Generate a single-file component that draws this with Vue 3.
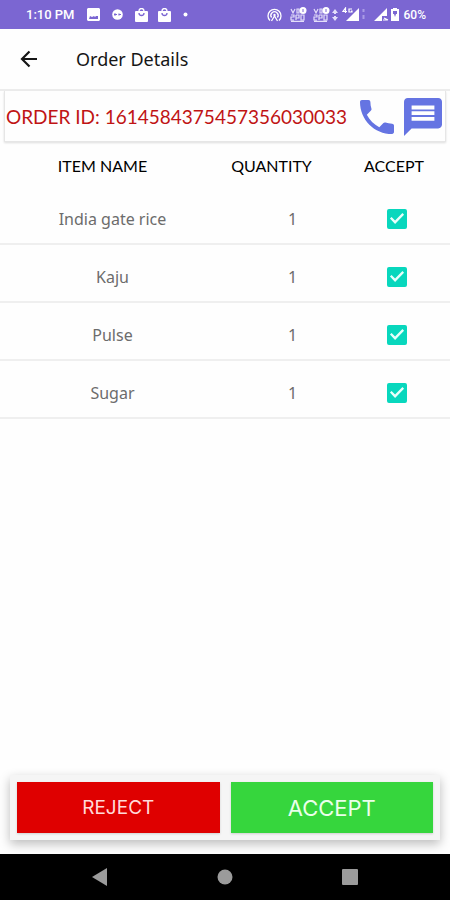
<script setup>
import { ref } from 'vue'

const orderId = '1614584375457356030033'
const items = ref([
  { name: 'India gate rice', quantity: 1, accepted: true },
  { name: 'Kaju', quantity: 1, accepted: true },
  { name: 'Pulse', quantity: 1, accepted: true },
  { name: 'Sugar', quantity: 1, accepted: true },
])
</script>

<template>
  <div class="screen">
    <div class="status">
      <div class="status-left">
        <span class="time">1:10 PM</span>
        <svg width="13" height="13" viewBox="0 0 13 13"><path fill="#fff" fill-rule="evenodd" d="M1 0h11l1 1v11l-1 1H1l-1-1V1zM2 11h9V8H9L8 9 7 8 5 9 3 8z" /></svg>
        <svg width="11" height="11" viewBox="0 0 11 11"><circle cx="5.500" cy="5.500" r="5.300" fill="#fff" /><path d="M2 5.500h3m1.500 0H9M3 4.300v2.400M7 4.500v2" stroke="#7b66d2" stroke-width="1.200" /></svg>
        <svg v-for="n in 2" :key="n" class="bag" width="13" height="14" viewBox="0 0 13 14"><path d="M4 4V3a2.500 2.500 0 0 1 5 0v1" fill="none" stroke="#fff" stroke-width="1.300" /><rect y="3" width="13" height="11" rx="1" fill="#fff" /><path d="M4 5a2.500 2.500 0 0 0 5 0" fill="none" stroke="#7b66d2" stroke-width="1.300" /></svg>
        <svg width="5" height="5" viewBox="0 0 5 5"><circle cx="2.500" cy="2.500" r="2" fill="#fff" /></svg>
      </div>
      <div class="status-right">
        <svg class="hotspot" width="15" height="14" viewBox="0 0 15 14" fill="none" stroke="#fff" stroke-width="1.300"><path d="M3 12.500a6.500 6.500 0 1 1 9 0M4.600 9.500a3.600 3.600 0 1 1 5.800 0M4.500 13l3-5 3 5" /><circle cx="7.500" cy="7" r="1.200" fill="#fff" stroke="none" /></svg>
        <svg v-for="n in 2" :key="n" class="volte" width="17" height="15" viewBox="0 0 17 15"><g fill="none" stroke="#e4defa" stroke-width="1.200"><path d="M1 2l2 4 2-4M7 2h2v4H7zM1 8h3v2H1v3h3M6 8v5m0-5h3v3H6M11 8v5h3V8zM1 14.300h13" /></g><circle cx="13" cy="3.500" r="3.500" fill="#fff" /><path d="M13 2v3" stroke="#7b66d2" /></svg>
        <svg class="updown" width="6" height="12" viewBox="0 0 6 12"><path d="M3 0l3 4H4v1H2V4H0zM3 12L0 8h2V7h2v1h2z" fill="#e4defa" /></svg>
        <svg class="signal4g" width="24" height="15" viewBox="0 0 24 15"><path d="M17 1v13H4z" fill="#fff" /><path d="M3.500 6V1L1 4.500h4M10 2H7v3h3V4H9" fill="none" stroke="#fff" stroke-width="1.200" /><path d="M21.500 2v3m0 3v4" stroke="#aa9be5" stroke-width="2" /></svg>
        <svg class="signal" width="15" height="13" viewBox="0 0 15 13"><path d="M13 0v8H8v5H0z" fill="#fff" /><path d="M9 12h4M10 10l4 2" stroke="#fff" stroke-width="1.200" /></svg>
        <svg class="battery" width="8" height="13" viewBox="0 0 8 13"><path d="M2 0h4v1h2v12H0V1h2z" fill="#fff" /><path d="M2 3h4v3H5l-1 3-1-3H2z" fill="#7b66d2" /></svg>
        <span class="percent">60%</span>
      </div>
    </div>

    <header class="appbar">
      <button class="icon-button" type="button" aria-label="Back">
        <svg width="18" height="18" viewBox="0 0 18 18" fill="none" stroke="#161616" stroke-width="2.200"><path d="M17 9H2M9.500 1.500L2 9l7.500 7.500" /></svg>
      </button>
      <h1>Order Details</h1>
    </header>

    <main>
      <section class="order">
        <p>ORDER ID: {{ orderId }}</p>
        <button class="icon-button" type="button" aria-label="Call customer">
          <svg width="34" height="34" viewBox="3 3 18 18"><path fill="#6574e2" d="M6.620 10.790c1.440 2.830 3.760 5.140 6.590 6.590l2.200-2.200c.270-.270.670-.360 1.020-.240 1.120.370 2.330.570 3.570.570.550 0 1 .450 1 1V20c0 .550-.450 1-1 1-9.390 0-17-7.610-17-17 0-.550.450-1 1-1h3.500c.550 0 1 .450 1 1 0 1.250.200 2.450.570 3.570.110.350.030.740-.250 1.020z" /></svg>
        </button>
        <button class="icon-button" type="button" aria-label="Message customer">
          <svg width="38" height="38" viewBox="2 2 20 20"><path fill="#6574e2" d="M20 2H4c-1.100 0-1.990.900-1.990 2L2 22l4-4h14c1.100 0 2-.900 2-2V4c0-1.100-.900-2-2-2zM6 9h12v2H6zm12 5H6v-2h12zm0-6H6V6h12z" /></svg>
        </button>
      </section>

      <table>
        <thead>
          <tr>
            <th class="name" scope="col">ITEM NAME</th>
            <th class="quantity" scope="col">QUANTITY</th>
            <th class="accept" scope="col">ACCEPT</th>
          </tr>
        </thead>
        <tbody>
          <tr v-for="item in items" :key="item.name">
            <td>{{ item.name }}</td>
            <td>{{ item.quantity }}</td>
            <td class="check"><input v-model="item.accepted" type="checkbox" :aria-label="item.name"></td>
          </tr>
        </tbody>
      </table>
    </main>

    <div class="actions">
      <button class="reject" type="button">REJECT</button>
      <button class="approve" type="button">ACCEPT</button>
    </div>

    <nav class="system">
      <button class="icon-button" type="button" aria-label="System back"><svg width="18" height="18" viewBox="0 0 18 18"><path d="M16 0v18L1 9z" fill="#9b9b9b" /></svg></button>
      <button class="icon-button" type="button" aria-label="Home"><svg width="18" height="18" viewBox="0 0 18 18"><circle cx="9" cy="9" r="7.500" fill="#9b9b9b" /></svg></button>
      <button class="icon-button" type="button" aria-label="Recent apps"><svg width="18" height="18" viewBox="0 0 18 18"><rect x="1" y="1" width="16" height="16" rx="1" fill="#9b9b9b" /></svg></button>
    </nav>
  </div>
</template>

<style>
body {
  background: #fefefe;
}
</style>

<style scoped>
.screen {
  display: flex;
  flex-direction: column;
  min-height: 100vh;
  font-family: "Noto Sans", sans-serif;
  color: #161616;
}

svg {
  display: block;
  flex: none;
}

.icon-button {
  display: flex;
  padding: 0;
  border: 0;
  background: none;
}

.status {
  display: flex;
  justify-content: space-between;
  align-items: center;
  height: 29px;
  padding: 0 24px 0 26px;
  background: #7b66d2;
  color: #fff;
  font: 500 12px/16px Roboto, sans-serif;
}

.status-left,
.status-right {
  display: flex;
  align-items: center;
}

.status-left {
  gap: 12px;
}

.time {
  font-size: 13px;
}

.bag + .bag {
  margin-left: -2px;
}

.hotspot,
.volte {
  margin-right: 8px;
}

.volte + .volte {
  margin-left: -2px;
}

.updown {
  margin-left: -6px;
  margin-right: 4px;
}

.signal4g {
  margin-right: 8px;
}

.battery {
  margin: 0 5px 0 2px;
}

.appbar {
  display: flex;
  align-items: center;
  gap: 38px;
  height: 60px;
  padding-left: 20px;
}

h1 {
  margin: 0;
  font-size: 18px;
  font-weight: 400;
  line-height: 24px;
}

main {
  flex: 1;
  border-top: 2px solid #ececec;
}

.order {
  display: flex;
  align-items: center;
  gap: 10px;
  height: 51px;
  margin: 0 4px;
  padding: 2px 3px 0 1px;
  border: 1px solid #e6e6e6;
  border-top: 0;
  box-shadow: 0 1px 2px #dedede;
  box-sizing: border-box;
}

.order p {
  flex: 1;
  margin: 0;
  color: #c01414;
  font: 400 19px/24px Lato, sans-serif;
  white-space: nowrap;
}

table {
  width: 100%;
  border-collapse: separate;
  border-spacing: 0;
  table-layout: fixed;
}

th {
  height: 45px;
  padding: 2px 0 0;
  box-sizing: border-box;
  font: 400 16px/24px Lato, sans-serif;
  color: #000;
}

.name {
  width: 50%;
  padding-right: 20px;
}

.quantity {
  width: 30%;
  padding-right: 42px;
}

.accept {
  width: 20%;
  padding-right: 22px;
}

td {
  height: 58px;
  padding: 7px 0 0;
  border-bottom: 2px solid #efefef;
  box-sizing: border-box;
  color: #6c6c6c;
  font-size: 16px;
  line-height: 24px;
  text-align: center;
}

.check {
  padding-right: 16px;
}

input {
  display: block;
  width: 20px;
  height: 20px;
  margin: 0 auto;
  border: 2px solid #757575;
  border-radius: 2px;
  appearance: none;
}

input:checked {
  border-color: #08d7bd;
  background: #08d7bd;
}

input:checked::before {
  display: block;
  height: 16px;
  background: #e8fffb;
  clip-path: polygon(6% 50%, 16% 41%, 38% 62%, 84% 16%, 94% 26%, 38% 84%);
  content: "";
}

.actions {
  display: grid;
  grid-template-columns: 1fr 1fr;
  gap: 11px;
  margin: 0 10px 14px;
  padding: 7px;
  background: #f5f5f5;
  box-shadow: 0 4px 10px #bcbcbc;
}

.actions button {
  height: 51px;
  padding: 0;
  border: 0;
  font: 400 22px/24px Inter, sans-serif;
  box-shadow: 0 1px 2px #cfcfcf;
}

.actions .reject {
  background: #df0000;
  color: #ffdada;
  font-size: 19px;
}

.actions .approve {
  background: #36d63d;
  color: #eaffea;
}

.system {
  position: relative;
  display: flex;
  justify-content: center;
  gap: 107px;
  padding: 14px 0;
  background: #000;
}
</style>
